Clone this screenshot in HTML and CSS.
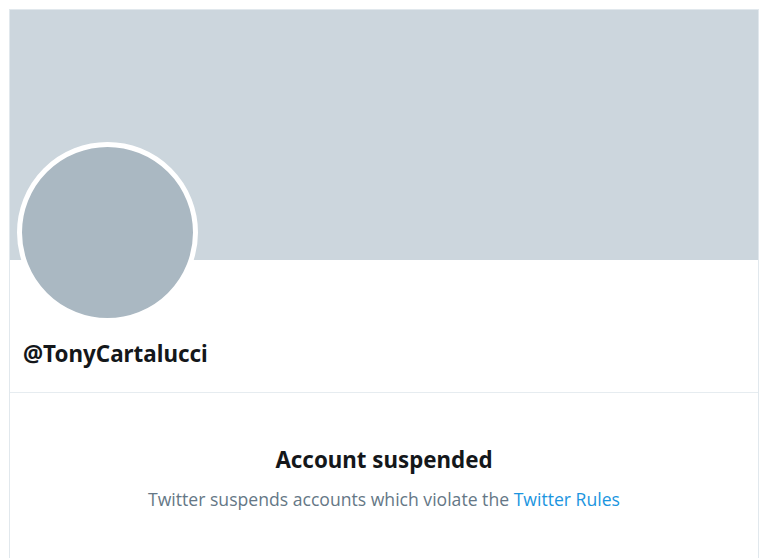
FILE: index.html
```html
<!DOCTYPE html>
<html>
<head>
<meta charset="utf-8">
<link rel="stylesheet" href="styles.css">
</head>
<body>
<div class="profile">
  <div class="banner"></div>
  <div class="header">
    <div class="avatar"></div>
    <div class="handle">@TonyCartalucci</div>
  </div>
  <div class="notice">
    <div class="notice-title">Account suspended</div>
    <div class="notice-text">Twitter suspends accounts which violate the <a class="rules-link" href="#">Twitter Rules</a></div>
  </div>
</div>
</body>
</html>
```
FILE: styles.css
```css
html, body {
  margin: 0;
  padding: 0;
  background: #ffffff;
}
body {
  font-family: "Open Sans", "Noto Sans", "Liberation Sans", sans-serif;
  padding: 9px 0 0 9px;
}
.profile {
  width: 750px;
  border-left: 1px solid #e1e8ed;
  border-right: 1px solid #e1e8ed;
  border-top: 1px solid #e1e8ed;
  height: 560px;
  box-sizing: border-box;
}
.banner {
  height: 250px;
  background: #ccd6dd;
}
.header {
  display: flow-root;
  padding: 0 0 0 7px;
  border-bottom: 1px solid #e6ecf0;
  height: 133px;
  box-sizing: border-box;
}
.avatar {
  width: 171px;
  height: 171px;
  margin-top: -118px;
  border-radius: 50%;
  background: #aab8c2;
  border: 5px solid #ffffff;
}
.handle {
  margin: 17px 0 0 6px;
  font-family: "Noto Sans", "Open Sans", sans-serif;
  font-weight: 700;
  font-size: 22.4px;
  line-height: 28px;
  color: #14171a;
}
.notice {
  text-align: center;
  padding-top: 53px;
}
.notice-title {
  font-family: "Noto Sans", "Open Sans", sans-serif;
  font-weight: 700;
  font-size: 22.3px;
  line-height: 28px;
  color: #14171a;
}
.notice-text {
  margin-top: 14px;
  font-family: "Open Sans", "Noto Sans", sans-serif;
  font-size: 17.6px;
  line-height: 22px;
  color: #657786;
}
.rules-link {
  color: #1b95e0;
  text-decoration: none;
}
```
